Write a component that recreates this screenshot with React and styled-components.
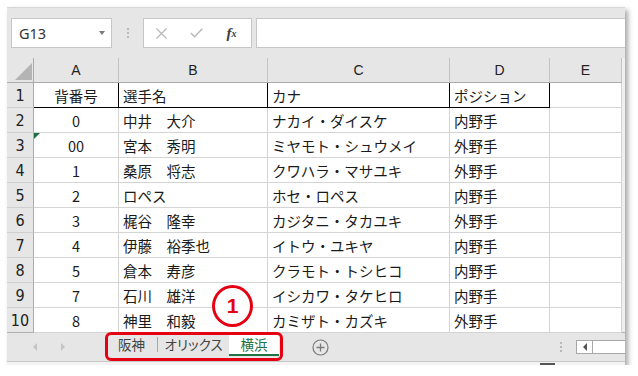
import { Fragment } from "react";
import styled, { createGlobalStyle } from "styled-components";

const GlobalStyle = createGlobalStyle`
    body {
        margin: 0;
        background: #fff;
    }
`;

const JP = `"Noto Sans CJK JP", "Noto Sans", sans-serif`;
const NUM = `"Liberation Sans Narrow", "DejaVu Sans Condensed", "Liberation Sans", sans-serif`;
const RED = "#e50012";

const Window = styled.div`
    position: relative;
    margin: 7px 0 0 7px;
    width: 618px;
    background: #e6e6e6;
    border-top: 1px solid #d6d6d6;
    box-shadow: 3px 3px 5px rgba(0, 0, 0, 0.35);
    display: flex;
    flex-direction: column;
`;

const FormulaBar = styled.div`
    display: flex;
    height: 30px;
    padding: 10px 0 0 4px;
    margin-bottom: 10px;
`;

const NameBox = styled.div`
    box-sizing: border-box;
    width: 101px;
    border: 1px solid #c6c6c6;
    background: #fff;
    display: flex;
    align-items: center;
    justify-content: space-between;
    padding: 0 6px 0 7px;
    font-family: "Noto Sans", sans-serif;
    font-size: 14.5px;
    color: #333;
`;

const Caret = styled.span`
    width: 0;
    height: 0;
    border-left: 3.5px solid transparent;
    border-right: 3.5px solid transparent;
    border-top: 4px solid #7a7a7a;
`;

const GripArea = styled.div`
    width: ${(p) => p.$w}px;
    display: flex;
    justify-content: center;
    align-items: center;
`;

const Grip = styled.span`
    width: 2px;
    height: 2px;
    margin-top: -8px;
    background: #b8b8b8;
    box-shadow: 0 4px 0 #b8b8b8, 0 8px 0 #b8b8b8;
`;

const FxBox = styled.div`
    box-sizing: border-box;
    width: 109px;
    border: 1px solid #c6c6c6;
    background: #fff;
    display: flex;
    align-items: center;
`;

const FxSlot = styled.span`
    width: 35px;
    display: flex;
    justify-content: center;
    align-items: center;
    color: #3c3c3c;
    font-family: "Liberation Serif", serif;
    font-style: italic;
    font-weight: bold;
    font-size: 15px;
    sub {
        font-size: 10px;
        vertical-align: -1px;
    }
`;

const FormulaInput = styled.div`
    flex: 1;
    margin-left: 4px;
    border: 1px solid #c6c6c6;
    border-right: none;
    background: #fff;
`;

const Sheet = styled.div`
    display: grid;
    grid-template-columns: 27px 85px 149px 182px 100px 72px 3px;
    grid-auto-rows: 25px;
`;

const Corner = styled.div`
    position: relative;
    border-right: 1px solid #ababab;
    border-bottom: 1px solid #ababab;
    &::after {
        content: "";
        position: absolute;
        right: 1px;
        bottom: 2px;
        border-left: 17px solid transparent;
        border-bottom: 17px solid #b4b4b4;
    }
`;

const ColHead = styled.div`
    display: flex;
    align-items: center;
    justify-content: center;
    border-right: 1px solid #c4c4c4;
    border-bottom: 1px solid #ababab;
    font-family: "Liberation Sans", sans-serif;
    font-size: 14px;
    color: #222;
`;

const RowHead = styled.div`
    display: flex;
    align-items: center;
    justify-content: center;
    border-right: 1px solid #ababab;
    border-bottom: 1px solid #cfcfcf;
    font-family: ${NUM};
    font-size: 16px;
    color: #222;
`;

const Cell = styled.div`
    position: relative;
    display: flex;
    align-items: center;
    justify-content: ${(p) => (p.$center ? "center" : "flex-start")};
    padding-left: ${(p) => (p.$center ? 0 : 4)}px;
    background: #fff;
    border-right: 1px solid ${(p) => (p.$ruled ? "#000" : "#d4d4d4")};
    border-bottom: 1px solid ${(p) => (p.$ruled ? "#000" : "#d4d4d4")};
    font-family: ${JP};
    font-size: 14.5px;
    color: #1a1a1a;
    white-space: nowrap;
    ${(p) =>
        p.$flag &&
        `&::before {
            content: "";
            position: absolute;
            left: 0;
            top: 0;
            border-top: 6px solid #1e7145;
            border-right: 6px solid transparent;
        }`}
`;

const Edge = styled.div`
    background: #efefef;
`;

const TabBar = styled.div`
    display: flex;
    align-items: flex-start;
    height: 28px;
    margin-top: -1px;
    border-top: 1px solid #b0b0b0;
`;

const Nav = styled.div`
    width: 99px;
    height: 27px;
    display: flex;
    align-items: center;
    gap: 24px;
    padding-left: 26px;
    box-sizing: border-box;
`;

const Arrow = styled.span`
    width: 0;
    height: 0;
    border-top: 4px solid transparent;
    border-bottom: 4px solid transparent;
    ${(p) =>
        p.$left
            ? `border-right: 4px solid ${p.$dark ? "#555" : "#c4c4c4"};`
            : `border-left: 4px solid ${p.$dark ? "#555" : "#c4c4c4"};`}
`;

const TabGroup = styled.div`
    position: relative;
    display: flex;
    align-items: center;
    height: 23px;
    &::after {
        content: "";
        position: absolute;
        left: -1px;
        top: -1px;
        right: -4px;
        bottom: -5px;
        border: 3px solid ${RED};
        border-radius: 6px;
    }
`;

const Tab = styled.div`
    box-sizing: border-box;
    height: 23px;
    width: ${(p) => p.$w}px;
    display: flex;
    align-items: center;
    justify-content: center;
    font-family: ${JP};
    font-size: 13.5px;
    font-feature-settings: "palt";
    color: ${(p) => (p.$active ? "#217346" : "#444")};
    background: ${(p) => (p.$active ? "#fff" : "transparent")};
    border-bottom: 2px solid ${(p) => (p.$active ? "#217346" : "transparent")};
`;

const TabSep = styled.span`
    width: 1px;
    height: 15px;
    background: #a8a8a8;
`;

const PlusButton = styled.svg`
    margin: 6px 0 0 33px;
`;

const Spacer = styled.div`
    flex: 1;
`;

const HScroll = styled.div`
    box-sizing: border-box;
    width: 49px;
    height: 14px;
    margin: 7px 0 0 14px;
    border: 1px solid #a8a8a8;
    border-right: none;
    background: #fff;
    display: flex;
`;

const ScrollBtn = styled.div`
    width: 15px;
    border-right: 1px solid #a8a8a8;
    display: flex;
    align-items: center;
    justify-content: center;
`;

const StatusEdge = styled.div`
    height: 3px;
    border-top: 1px solid #c8c8c8;
    background: #f3f3f3;
    display: flex;
    justify-content: flex-end;
    align-items: flex-end;
    padding-right: 70px;
`;

const StatusMark = styled.span`
    width: 15px;
    height: 2px;
    background: #555;
`;

const Callout = styled.div`
    position: absolute;
    left: 205px;
    top: 277px;
    box-sizing: border-box;
    width: 41px;
    height: 42px;
    border: 3px solid ${RED};
    border-radius: 50%;
    background: #fff;
    display: flex;
    align-items: center;
    justify-content: center;
    font-family: "Liberation Sans", sans-serif;
    font-weight: bold;
    font-size: 21px;
    color: ${RED};
`;

const rows = [
    ["背番号", "選手名", "カナ", "ポジション"],
    ["0", "中井　大介", "ナカイ・ダイスケ", "内野手"],
    ["00", "宮本　秀明", "ミヤモト・シュウメイ", "外野手"],
    ["1", "桑原　将志", "クワハラ・マサユキ", "外野手"],
    ["2", "ロペス", "ホセ・ロペス", "内野手"],
    ["3", "梶谷　隆幸", "カジタニ・タカユキ", "外野手"],
    ["4", "伊藤　裕季也", "イトウ・ユキヤ", "内野手"],
    ["5", "倉本　寿彦", "クラモト・トシヒコ", "内野手"],
    ["7", "石川　雄洋", "イシカワ・タケヒロ", "内野手"],
    ["8", "神里　和毅", "カミザト・カズキ", "外野手"],
];

const App = () => {
    return (
        <>
            <GlobalStyle />
            <Window>
                <FormulaBar>
                    <NameBox>
                        G13
                        <Caret />
                    </NameBox>
                    <GripArea $w={31}>
                        <Grip />
                    </GripArea>
                    <FxBox>
                        <FxSlot>
                            <svg width="11" height="11" viewBox="0 0 11 11">
                                <path d="M0.5 0.5 L10.5 10.5 M10.5 0.5 L0.5 10.5" stroke="#b8b8b8" strokeWidth="1.2" />
                            </svg>
                        </FxSlot>
                        <FxSlot>
                            <svg width="13" height="10" viewBox="0 0 13 10">
                                <path d="M0.8 5 L4.5 8.8 L12.3 0.8" stroke="#b8b8b8" strokeWidth="1.5" fill="none" />
                            </svg>
                        </FxSlot>
                        <FxSlot>
                            f<sub>x</sub>
                        </FxSlot>
                    </FxBox>
                    <FormulaInput />
                </FormulaBar>

                <Sheet>
                    <Corner />
                    {["A", "B", "C", "D", "E"].map((c) => (
                        <ColHead key={c}>{c}</ColHead>
                    ))}
                    <Edge />
                    {rows.map((r, i) => (
                        <Fragment key={i}>
                            <RowHead>{i + 1}</RowHead>
                            {r.map((v, j) => (
                                <Cell
                                    key={j}
                                    $center={j === 0}
                                    $ruled={i === 0}
                                    $flag={i === 2 && j === 0}
                                >
                                    {v}
                                </Cell>
                            ))}
                            <Cell />
                            <Edge />
                        </Fragment>
                    ))}
                </Sheet>

                <TabBar>
                    <Nav>
                        <Arrow $left />
                        <Arrow />
                    </Nav>
                    <TabGroup>
                        <Tab $w={51}>阪神</Tab>
                        <TabSep />
                        <Tab $w={71}>オリックス</Tab>
                        <Tab $w={50} $active>
                            横浜
                        </Tab>
                    </TabGroup>
                    <PlusButton width="17" height="17" viewBox="0 0 17 17">
                        <circle cx="8.5" cy="8.5" r="7.5" fill="none" stroke="#7a7a7a" strokeWidth="1.2" />
                        <path d="M8.5 4.5 V12.5 M4.5 8.5 H12.5" stroke="#7a7a7a" strokeWidth="1.3" />
                    </PlusButton>
                    <Spacer />
                    <GripArea $w={2} style={{ height: 27 }}>
                        <Grip />
                    </GripArea>
                    <HScroll>
                        <ScrollBtn>
                            <Arrow $left $dark />
                        </ScrollBtn>
                    </HScroll>
                </TabBar>
                <StatusEdge>
                    <StatusMark />
                </StatusEdge>

                <Callout>1</Callout>
            </Window>
        </>
    );
};

export default App;
